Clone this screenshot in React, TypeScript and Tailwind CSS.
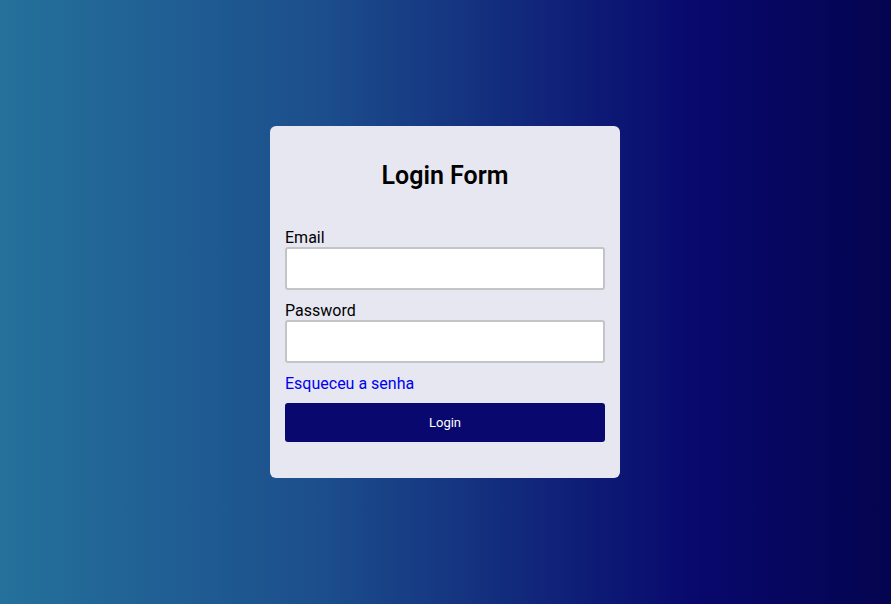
export default function App() {
    return (
        <div
            className="flex h-[604px] w-full items-center justify-center pr-px bg-[linear-gradient(90deg,#24719b_0%,#1c4e8c_36%,#08086d_78%,#04044f_100%)]"
            style={{ fontFamily: "Roboto, 'Noto Sans', sans-serif" }}
        >
            {/* ─── Card ─────────────────────────────────────────────── */}
            <form className="flex w-[350px] flex-col rounded-[6px] bg-[#e6e7f1] px-[15px] pt-[36px] pb-[36px]">
                <h2 className="text-center text-[25px] leading-[28px] font-semibold text-black">
                    Login Form
                </h2>

                <label className="mt-[38px] text-[16px] leading-[19px] text-black">Email</label>
                <input
                    type="email"
                    className="h-[43px] w-full rounded-[3px] border-2 border-[#c3c4c6] bg-white px-2 outline-none"
                />

                <label className="mt-[11px] text-[16px] leading-[19px] text-black">Password</label>
                <input
                    type="password"
                    className="h-[43px] w-full rounded-[3px] border-2 border-[#c3c4c6] bg-white px-2 outline-none"
                />

                <a href="#" className="mt-[11px] text-[16px] leading-[19px] text-[#0000ee]">
                    Esqueceu a senha
                </a>

                <button
                    type="button"
                    className="mt-[10px] h-[39px] w-full rounded-[3px] bg-[#08086e] text-[13px] font-normal text-white"
                >
                    Login
                </button>
            </form>
        </div>
    );
}
